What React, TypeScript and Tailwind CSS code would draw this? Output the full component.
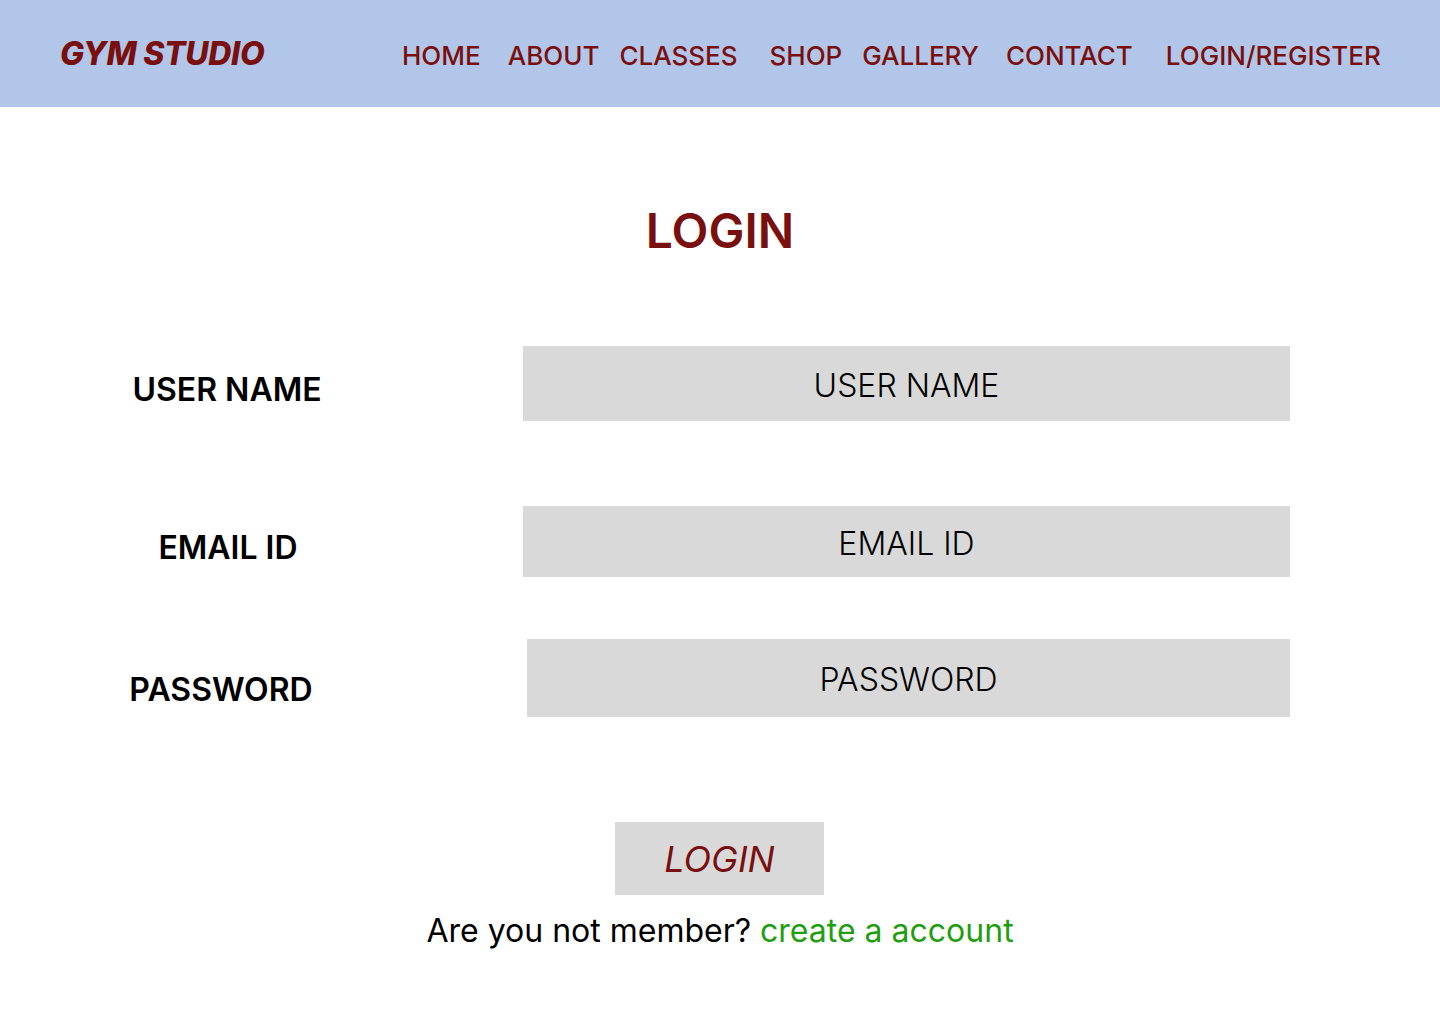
const navItems = [
  { label: 'HOME', cls: 'ml-0' },
  { label: 'ABOUT', cls: 'ml-[27px]' },
  { label: 'CLASSES', cls: 'ml-[20px]' },
  { label: 'SHOP', cls: 'ml-[32px]' },
  { label: 'GALLERY', cls: 'ml-[20px]' },
  { label: 'CONTACT', cls: 'ml-[27px]' },
  { label: 'LOGIN/REGISTER', cls: 'ml-[33px]' },
]

function Header() {
  return (
    <header className="flex h-[107px] items-center bg-[#b1c6e8] px-[60px]">
      <div className="w-[205px] shrink-0 whitespace-nowrap text-[32px] font-extrabold italic tracking-[-0.3px] text-[#7a0f0f]">
        GYM STUDIO
      </div>
      <nav className="ml-[137px] flex items-center whitespace-nowrap pt-[4px]">
        {navItems.map((item) => (
          <a key={item.label} href="#" className={`${item.cls} text-[26px] font-medium text-[#7a0f0f]`}>
            {item.label}
          </a>
        ))}
      </nav>
    </header>
  )
}

function Field({
  label,
  placeholder,
  labelCls,
  inputCls,
}: {
  label: string
  placeholder: string
  labelCls: string
  inputCls: string
}) {
  return (
    <div className="flex items-center">
      <label className={`text-center text-[32px] font-semibold text-black ${labelCls}`}>{label}</label>
      <input
        placeholder={placeholder}
        className={`bg-[#d9d9d9] pt-[3px] text-center text-[32px] font-light text-black outline-none placeholder:text-black ${inputCls}`}
      />
    </div>
  )
}

export default function App() {
  return (
    <div className="min-h-[1024px] bg-white font-['Inter',sans-serif]">
      <Header />
      <main className="flex flex-col">
        <h1 className="mt-[95px] text-center text-[48px] font-semibold leading-[58px] text-[#7a0f0f]">LOGIN</h1>

        <div className="mt-[86px] flex flex-col">
          <Field
            label="USER NAME"
            placeholder="USER NAME"
            labelCls="w-[454px] pt-[12px]"
            inputCls="ml-[69px] h-[75px] w-[767px]"
          />
          <div className="mt-[85px]">
            <Field
              label="EMAIL ID"
              placeholder="EMAIL ID"
              labelCls="w-[456px] pt-[12px]"
              inputCls="ml-[67px] h-[71px] w-[767px]"
            />
          </div>
          <div className="mt-[62px]">
            <Field
              label="PASSWORD"
              placeholder="PASSWORD"
              labelCls="w-[442px] pt-[24px]"
              inputCls="ml-[85px] h-[78px] w-[763px]"
            />
          </div>
        </div>

        <div className="mt-[105px] flex justify-center">
          <button
            type="button"
            className="ml-[-1px] h-[73px] w-[209px] bg-[#d9d9d9] text-[36px] font-normal italic text-[#7a0f0f]"
          >
            LOGIN
          </button>
        </div>
        <p className="mt-[12px] text-center text-[32px] text-black">
          Are you not member? <a href="#" className="text-[#1f9e10]">create a account</a>
        </p>
      </main>
    </div>
  )
}
